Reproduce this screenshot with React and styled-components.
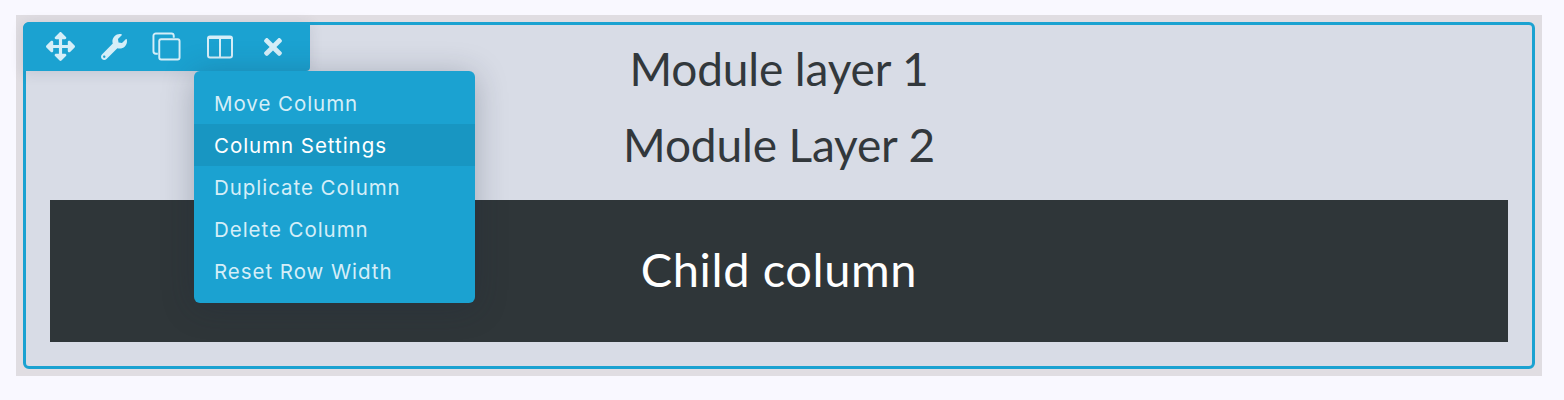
import React from 'react'
import styled, { createGlobalStyle } from 'styled-components'
import { FaArrowsAlt, FaWrench, FaTimes } from 'react-icons/fa'

const Global = createGlobalStyle`
  html, body { margin: 0; padding: 0; background: #f9f8ff; }
  body { font-family: "Inter", "Liberation Sans", sans-serif; }
`

const Page = styled.div`
  height: 400px;
  box-sizing: border-box;
  padding: 15px 22px 24px 16px;
`

const Band = styled.div`
  height: 100%;
  box-sizing: border-box;
  padding: 7px;
  background: #e0dde2;
`

const Frame = styled.div`
  position: relative;
  height: 100%;
  box-sizing: border-box;
  border: 3px solid #1ba2d1;
  border-radius: 6px;
  background: #d8dce6;
  padding: 0 24px 24px;
  display: flex;
  flex-direction: column;
`

const Headings = styled.div`
  height: 175px;
`

const Heading = styled.div`
  height: ${props => props.$h}px;
  display: flex;
  align-items: center;
  justify-content: center;
  font-family: "Lato", "Liberation Sans", sans-serif;
  font-size: 46px;
  font-weight: 400;
  letter-spacing: -0.15px;
  color: #32383c;
`

const Child = styled.div`
  flex: 1;
  display: flex;
  align-items: center;
  justify-content: center;
  padding-bottom: 4px;
  background: #2f3639;
  color: #fff;
  font-family: "Lato", "Liberation Sans", sans-serif;
  font-size: 47px;
  font-weight: 400;
  letter-spacing: 0.6px;
`

const Toolbar = styled.div`
  position: absolute;
  top: -3px;
  left: -3px;
  width: 287px;
  height: 49px;
  box-sizing: border-box;
  padding-left: 11px;
  display: flex;
  align-items: center;
  background: #1ba2d1;
  border-radius: 7px 0 4px 0;
  box-shadow: 0 2px 14px rgba(40, 50, 70, 0.12);
`

const ToolButton = styled.div`
  width: 53px;
  height: 46px;
  display: flex;
  align-items: center;
  justify-content: center;
  color: #d5eef8;
`

const Menu = styled.ul`
  position: absolute;
  top: 46px;
  left: 168px;
  width: 281px;
  margin: 0;
  padding: 11px 0;
  list-style: none;
  background: #1ba2d1;
  border-radius: 6px;
  box-shadow: 0 4px 32px rgba(30, 40, 60, 0.28);
`

const MenuItem = styled.li`
  height: 42px;
  padding: 1px 0 0 20px;
  box-sizing: border-box;
  display: flex;
  align-items: center;
  font-size: 20.5px;
  font-weight: 400;
  letter-spacing: 0.95px;
  color: ${props => (props.$active ? '#ffffff' : '#d5eef8')};
  background: ${props => (props.$active ? '#1896c2' : 'transparent')};
`

const CloneIcon = () => (
  <svg width="29" height="29" viewBox="0 0 30 30" fill="none" stroke="currentColor" strokeWidth="2">
    <path d="M6 22.5H4a2.5 2.5 0 0 1-2.5-2.5V4A2.5 2.5 0 0 1 4 1.5h16A2.5 2.5 0 0 1 22.5 4v2" />
    <rect x="7.5" y="7.5" width="21" height="21" rx="2" />
  </svg>
)

const ColumnsIcon = () => (
  <svg width="26" height="24" viewBox="0 0 26 24" fill="none" stroke="currentColor" strokeWidth="2">
    <rect x="1" y="1.5" width="24" height="21" rx="2" />
    <path d="M13 2v20M2 3h22" />
  </svg>
)

const items = ['Move Column', 'Column Settings', 'Duplicate Column', 'Delete Column', 'Reset Row Width']

export default function App() {
  return (
    <Page>
      <Global />
      <Band>
        <Frame>
          <Headings>
            <Heading $h={86}>Module layer 1</Heading>
            <Heading $h={66}>Module Layer 2</Heading>
          </Headings>
          <Child>Child column</Child>
          <Toolbar>
            <ToolButton><FaArrowsAlt size={29} /></ToolButton>
            <ToolButton><FaWrench size={26} /></ToolButton>
            <ToolButton><CloneIcon /></ToolButton>
            <ToolButton><ColumnsIcon /></ToolButton>
            <ToolButton><FaTimes size={26} /></ToolButton>
          </Toolbar>
          <Menu>
            {items.map(item => (
              <MenuItem key={item} $active={item === 'Column Settings'}>{item}</MenuItem>
            ))}
          </Menu>
        </Frame>
      </Band>
    </Page>
  )
}
